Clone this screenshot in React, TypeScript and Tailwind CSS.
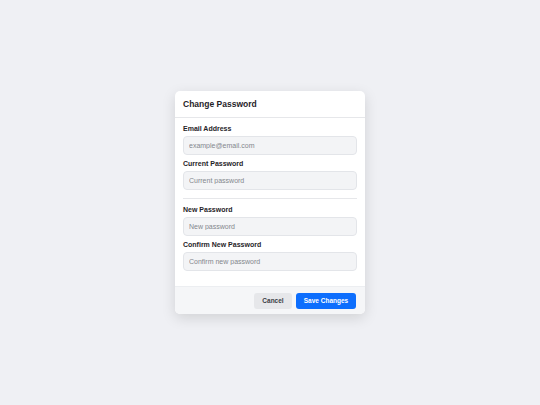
export default function App() {
  const font = { fontFamily: '"Liberation Sans", Arial, sans-serif' };

  const Field = ({ label, placeholder, type = "password" }: { label: string; placeholder: string; type?: string }) => (
    <div>
      <label className="block h-[8px] text-[7px] leading-[8px] font-bold text-[#1f2328] mb-[3px]">{label}</label>
      <input
        type={type}
        placeholder={placeholder}
        className="block w-full h-[19px] px-[5px] text-[7px] bg-[#f3f4f6] border border-[#e3e5e9] rounded-[4px] placeholder:text-[#83878d] outline-none"
      />
    </div>
  );

  return (
    <div className="w-[540px] h-[405px] bg-[#eff0f4] flex items-center justify-center" style={font}>
      <div className="w-[190px] bg-white rounded-[5px] shadow-[0_4px_14px_rgba(0,0,0,0.13)] overflow-hidden">
        {/* Header */}
        <div className="h-[27px] px-[8px] flex items-center border-b border-[#e6e7ea]">
          <h2 className="text-[8.5px] font-bold text-[#1f2328]">Change Password</h2>
        </div>

        {/* Body */}
        <div className="px-[8px] pt-[7px] pb-[15px]">
          <div className="flex flex-col gap-[5px]">
            <Field label="Email Address" placeholder="example@email.com" type="email" />
            <Field label="Current Password" placeholder="Current password" />
          </div>
          <div className="h-px bg-[#e6e7ea] mt-[8px] mb-[7px]" />
          <div className="flex flex-col gap-[5px]">
            <Field label="New Password" placeholder="New password" />
            <Field label="Confirm New Password" placeholder="Confirm new password" />
          </div>
        </div>

        {/* Footer */}
        <div className="h-[28px] bg-[#f5f6f8] border-t border-[#eceef1] flex items-center justify-end gap-[4px] px-[9px]">
          <button className="h-[16px] w-[38px] rounded-[3px] bg-[#e6e7ea] text-[6.5px] font-bold text-[#3a3e45]">
            Cancel
          </button>
          <button className="h-[16px] w-[60px] rounded-[3px] bg-[#0d6efd] text-[6.5px] font-bold text-white">
            Save Changes
          </button>
        </div>
      </div>
    </div>
  );
}
